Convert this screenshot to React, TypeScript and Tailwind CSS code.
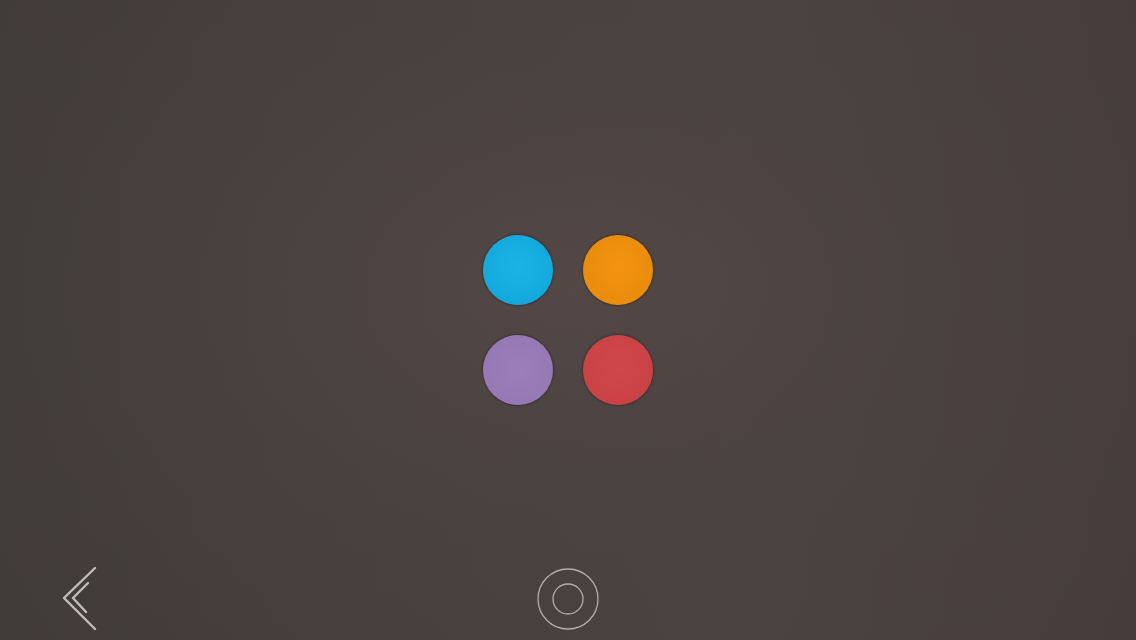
import React from "react";

function Dot({ cls }: { cls: string }) {
  return <div className={`h-[70px] w-[70px] rounded-full shadow-[0_0_2px_1px_rgba(40,30,30,0.45)] ${cls}`} />;
}

export default function App() {
  return (
    <div className="relative flex h-[640px] w-[1136px] flex-col overflow-hidden bg-[radial-gradient(ellipse_70%_80%_at_50%_45%,rgba(84,72,70,0.9)_0%,rgba(76,68,65,0.5)_45%,rgba(64,59,54,0)_100%),linear-gradient(90deg,#403b36_0%,#463f3b_40%,#4a4240_65%,#463c3b_100%)] pt-[235px]">
      <div className="mx-auto grid grid-cols-2 gap-[30px]">
        <Dot cls="bg-[radial-gradient(circle_at_50%_45%,#1ab3e5_0%,#14a9dc_70%,#109fd2_100%)]" />
        <Dot cls="bg-[radial-gradient(circle_at_50%_45%,#f39310_0%,#ea8c0c_70%,#de8209_100%)]" />
        <Dot cls="bg-[radial-gradient(circle_at_50%_50%,#9c7eba_0%,#9678b5_70%,#8b6daa_100%)]" />
        <Dot cls="bg-[radial-gradient(circle_at_50%_45%,#d0474b_0%,#cb4246_70%,#bf3a3e_100%)]" />
      </div>
      <div className="mt-[162px] grid h-[64px] grid-cols-3 items-center">
        <div className="pl-[60px]">
          <svg width="40" height="64" viewBox="0 0 40 64">
            <path d="M35 1 L4 31 L35 62" fill="none" stroke="#c2bdb9" strokeWidth="2.4" strokeLinecap="round" strokeLinejoin="round" />
            <path d="M28 16 L13 31 L26 45" fill="none" stroke="#c2bdb9" strokeWidth="2.4" strokeLinecap="round" strokeLinejoin="round" />
          </svg>
        </div>
        <div className="flex justify-center">
          <svg width="64" height="64" viewBox="0 0 64 64">
            <circle cx="32" cy="32" r="30" fill="none" stroke="#b5afab" strokeWidth="1.3" />
            <circle cx="32" cy="32" r="15" fill="none" stroke="#b5afab" strokeWidth="1.3" />
          </svg>
        </div>
        <div />
      </div>
    </div>
  );
}
